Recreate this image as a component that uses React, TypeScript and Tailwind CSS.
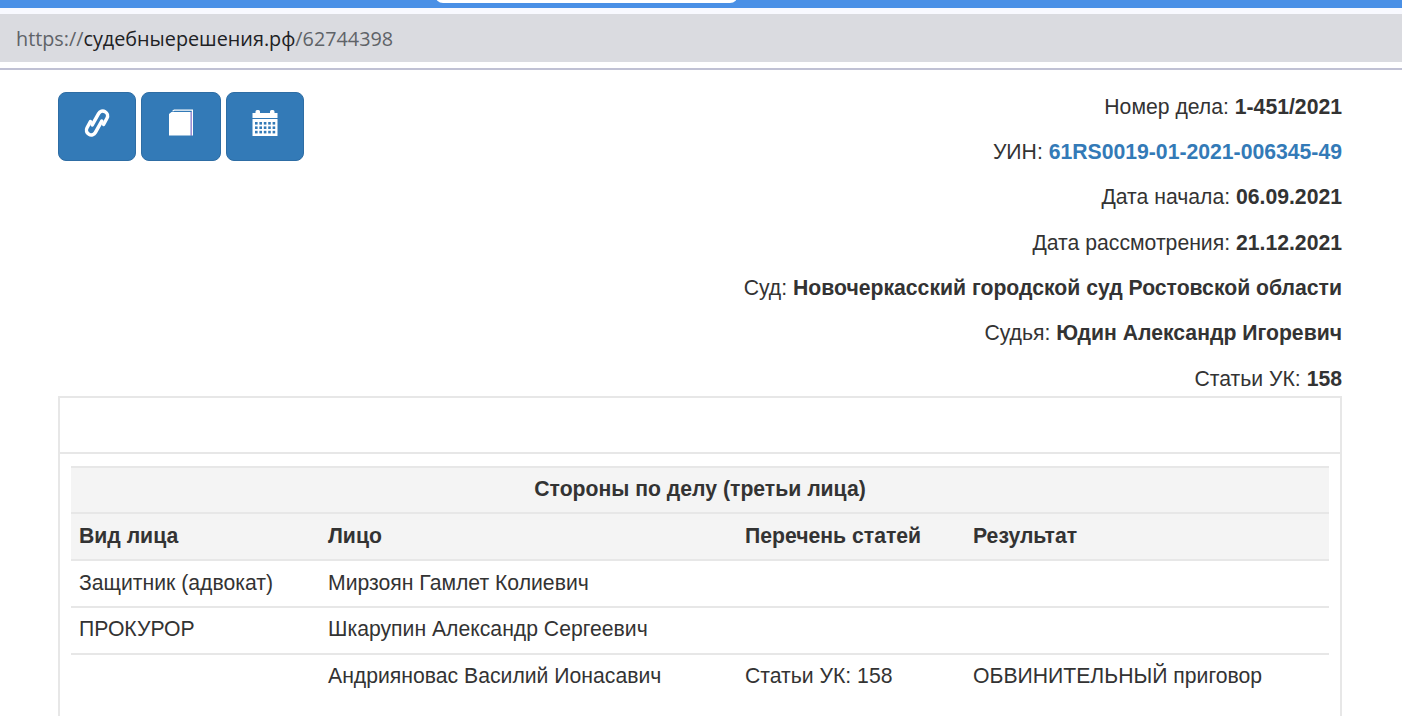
import React from 'react';

const FONT = { fontFamily: '"Liberation Sans", Arial, sans-serif' };

const LinkIcon = () => (
  <svg width="30" height="32" viewBox="-15 -16 30 32" fill="none" stroke="#fff" strokeWidth="3.5" strokeLinecap="round">
    <g transform="rotate(29)">
      <path d="M-3.200 4V-9a4.800 4.800 0 0 1 9.600 0V-2" />
      <path d="M3.200 -4V9a4.800 4.800 0 0 1 -9.600 0V2" />
    </g>
  </svg>
);

const BookIcon = () => (
  <svg width="26" height="28" viewBox="0 0 26 28">
    <path d="M4 2L6 0.500H25V26.500H23.800V1.700H6.500L5 2.500Z" fill="#fff" />
    <path d="M22.500 3H23.800V26.500H22.500Z" fill="#b48cd8" />
    <path d="M1 5L3.500 3H22.500V26.500H1Z" fill="#fff" />
  </svg>
);

const CalendarIcon = () => {
  const cells = [];
  for (let r = 0; r < 3; r++) {
    for (let c = 0; c < 5; c++) {
      cells.push(<rect key={`${r}-${c}`} x={3 + c * 4.4} y={13 + r * 4.4} width="2.6" height="2.6" fill="#337ab7" />);
    }
  }
  return (
    <svg width="26" height="28" viewBox="0 0 26 28">
      <path d="M0.500 4H3.500V2.500Q3.500 1 5 1H6.500Q8 1 8 2.500V4H18V2.500Q18 1 19.500 1H21Q22.500 1 22.500 2.500V4H25.500V9H0.500Z" fill="#fff" />
      <rect x="0.5" y="10" width="25" height="17" fill="#fff" />
      {cells}
    </svg>
  );
};

const IconButton: React.FC<{ width: string; children: React.ReactNode }> = ({ width, children }) => (
  <button className={`${width} h-[69px] flex items-center justify-center pb-[7px] rounded-[8px] bg-[#337ab7] border border-[#2e6da4]`}>
    {children}
  </button>
);

const info: { label: string; value: string; link?: boolean }[] = [
  { label: 'Номер дела:', value: '1-451/2021' },
  { label: 'УИН:', value: '61RS0019-01-2021-006345-49', link: true },
  { label: 'Дата начала:', value: '06.09.2021' },
  { label: 'Дата рассмотрения:', value: '21.12.2021' },
  { label: 'Суд:', value: 'Новочеркасский городской суд Ростовской области' },
  { label: 'Судья:', value: 'Юдин Александр Игоревич' },
  { label: 'Статьи УК:', value: '158' },
];

const rows = [
  { pad: 'pb-[2px]', cells: ['Защитник (адвокат)', 'Мирзоян Гамлет Колиевич', '', ''] },
  { pad: 'pb-[3px]', cells: ['ПРОКУРОР', 'Шкарупин Александр Сергеевич', '', ''] },
  { pad: 'pb-[4px]', cells: ['', 'Андрияновас Василий Ионасавич', 'Статьи УК: 158', 'ОБВИНИТЕЛЬНЫЙ приговор'] },
];

const headers = ['Вид лица', 'Лицо', 'Перечень статей', 'Результат'];

export default function App() {
  return (
    <div className="h-[716px] overflow-hidden bg-white text-[21.2px] leading-[28px] text-[#333]" style={FONT}>
      {/* browser chrome */}
      <div className="relative h-[8px] bg-[#4a90e6]">
        <div className="absolute left-[435px] top-[-8px] w-[303px] h-[11px] bg-white rounded-b-[8px]" />
      </div>
      <div className="pt-[6px] bg-[#f8f9ff]">
        <div className="h-[48px] flex items-center pl-[16px] pt-[1px] bg-[#dadbe0] text-[#5f6368] text-[19.8px]" style={{ fontFamily: '"Open Sans", "Noto Sans", sans-serif' }}>
          https://<span className="text-[#202124]">судебныерешения.рф</span>/62744398
        </div>
      </div>
      <div className="h-[6px] bg-white" />
      <div className="h-[2px] bg-[#c0c1d4]" />

      <div className="pl-[58px] pr-[60px] pt-[22px]">
        <div className="flex justify-between">
          <div className="flex gap-[5px]">
            <IconButton width="w-[78px]"><LinkIcon /></IconButton>
            <IconButton width="w-[80px]"><BookIcon /></IconButton>
            <IconButton width="w-[78px]"><CalendarIcon /></IconButton>
          </div>
          <div className="text-right pt-[0.6px] h-[304px]">
            {info.map((item) => (
              <div key={item.label} className="h-[28px] mb-[17.35px]">
                {item.label}{' '}
                <b className={item.link ? 'text-[#337ab7]' : ''}>{item.value}</b>
              </div>
            ))}
          </div>
        </div>

        <div className="border-2 border-b-0 border-[#e7e7e7] h-[400px]">
          <div className="h-[56px] border-b-2 border-[#e7e7e7]" />
          <div className="px-[11px] pt-[12px]">
            <table className="w-full table-fixed border-collapse">
              <colgroup>
                <col className="w-[249px]" />
                <col className="w-[417px]" />
                <col className="w-[228px]" />
                <col />
              </colgroup>
              <thead className="bg-[#f4f4f4]">
                <tr className="border-t-2 border-[#e7e7e7]">
                  <th colSpan={4} className="h-[46px] pb-[2px] text-center font-bold">Стороны по делу (третьи лица)</th>
                </tr>
                <tr className="border-t-2 border-[#e7e7e7]">
                  {headers.map((h) => (
                    <th key={h} className="h-[47px] px-[8px] pb-[2px] text-left font-bold">{h}</th>
                  ))}
                </tr>
              </thead>
              <tbody>
                {rows.map((row, i) => (
                  <tr key={i} className="border-t-2 border-[#e7e7e7]">
                    {row.cells.map((cell, j) => (
                      <td key={j} className={`h-[47px] px-[8px] ${row.pad}`}>{cell}</td>
                    ))}
                  </tr>
                ))}
              </tbody>
            </table>
          </div>
        </div>
      </div>
    </div>
  );
}
